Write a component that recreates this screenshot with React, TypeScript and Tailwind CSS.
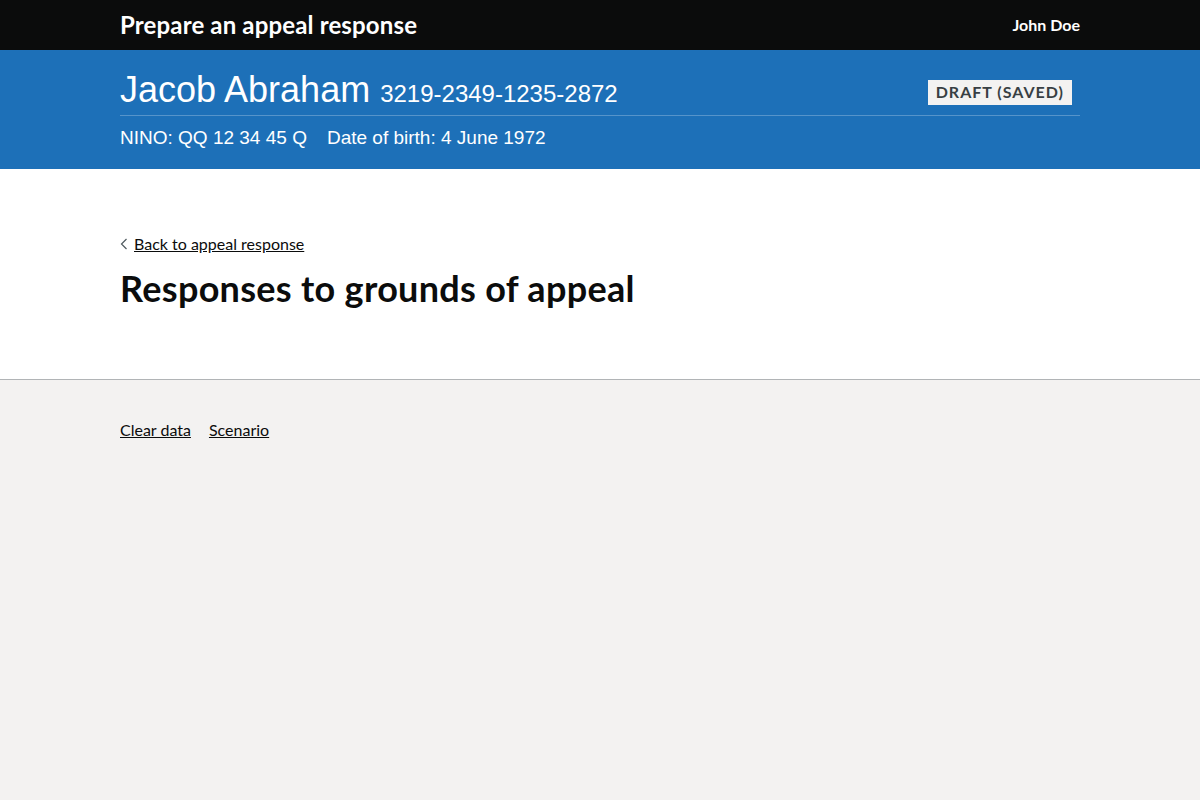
import React from "react";

const gds = { fontFamily: 'Lato, "Noto Sans", "Liberation Sans", Arial, sans-serif' };
const arial = { fontFamily: '"Liberation Sans", Arial, sans-serif' };

export default function App() {
  return (
    <div className="min-h-[800px] flex flex-col bg-[#f3f2f1]" style={gds}>
      <header className="bg-[#0b0c0c] h-[50px] text-white">
        <div className="mx-[120px] h-full flex items-center justify-between">
          <span className="text-[24px] font-bold tracking-[0.15px]">Prepare an appeal response</span>
          <span className="text-[16px] font-bold">John Doe</span>
        </div>
      </header>

      <div className="bg-[#1d70b8] text-white h-[119px]" style={arial}>
        <div className="mx-[120px] pt-[20px]">
          <div className="flex items-center justify-between border-b border-[#5694ca] pb-[1px]">
            <h1 className="text-[36px] leading-[40px]">
              Jacob Abraham <span className="text-[24px]">3219-2349-1235-2872</span>
            </h1>
            <span
              className="mr-[8px] bg-[#f3f2f1] text-[#383f43] text-[16px] font-bold uppercase tracking-[1px] px-[8px] h-[25px] flex items-center"
              style={gds}
            >
              Draft (saved)
            </span>
          </div>
          <div className="flex gap-[20px] text-[19px] mt-[8px]">
            <span>NINO: QQ 12 34 45 Q</span>
            <span>Date of birth: 4 June 1972</span>
          </div>
        </div>
      </div>

      <main className="bg-white h-[211px] border-b border-[#b1b4b6]">
        <div className="mx-[120px] pt-[63px]">
          <a href="#" className="flex items-center gap-[6px] text-[16px] text-[#0b0c0c] underline">
            <svg width="8" height="12" viewBox="0 0 8 12" className="mb-[1px]">
              <path d="M6.5 1 L1.5 6 L6.5 11" fill="none" stroke="#505a5f" strokeWidth="1.2" />
            </svg>
            Back to appeal response
          </a>
          <h2 className="mt-[12px] text-[36px] font-bold leading-[40px] tracking-[0.3px] text-[#0b0c0c]">
            Responses to grounds of appeal
          </h2>
        </div>
      </main>

      <footer className="flex-1">
        <div className="mx-[120px] pt-[38px] flex gap-[18px] text-[16px] text-[#0b0c0c]">
          <a href="#" className="underline">Clear data</a>
          <a href="#" className="underline">Scenario</a>
        </div>
      </footer>
    </div>
  );
}
